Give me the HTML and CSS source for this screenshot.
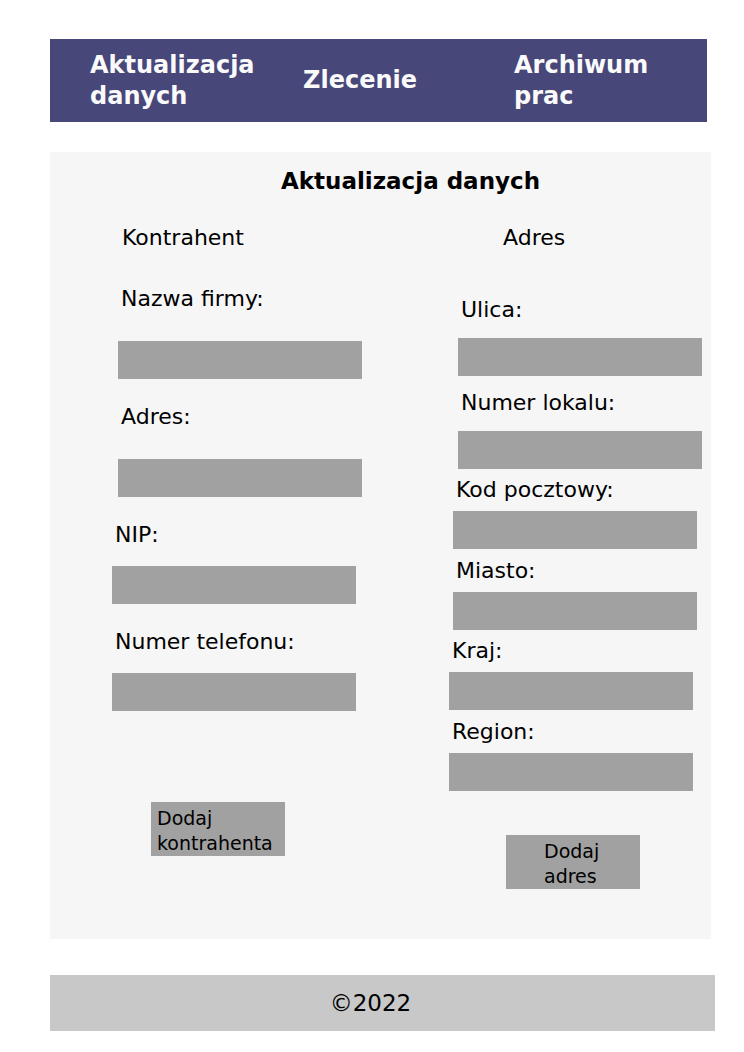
FILE: index.html
```html
<!DOCTYPE html>
<html lang="pl">
<head>
<meta charset="utf-8">
<meta name="viewport" content="width=device-width, initial-scale=1">
<title>Aktualizacja danych</title>
<link rel="stylesheet" href="styles.css">
</head>
<body>
<nav class="nav">
  <a class="nav-link" href="#dane">Aktualizacja<br>danych</a>
  <a class="nav-link" href="#zlecenie">Zlecenie</a>
  <a class="nav-link" href="#archiwum">Archiwum<br>prac</a>
</nav>
<main class="panel" id="dane">
  <h1 class="title">Aktualizacja danych</h1>
  <div class="columns">
    <form class="column column-client">
      <h2 class="subtitle">Kontrahent</h2>
      <div class="group group-airy inset-md">
        <div class="field"><label for="firma">Nazwa firmy:</label><input id="firma" type="text"></div>
        <div class="field"><label for="adres">Adres:</label><input id="adres" type="text"></div>
      </div>
      <div class="group group-medium">
        <div class="field"><label for="nip">NIP:</label><input id="nip" type="text"></div>
        <div class="field"><label for="telefon">Numer telefonu:</label><input id="telefon" type="tel"></div>
      </div>
      <button class="button" type="button">Dodaj<br>kontrahenta</button>
    </form>
    <form class="column column-address">
      <h2 class="subtitle">Adres</h2>
      <div class="group group-snug inset-lg">
        <div class="field"><label for="ulica">Ulica:</label><input id="ulica" type="text"></div>
        <div class="field"><label for="lokal">Numer lokalu:</label><input id="lokal" type="text"></div>
      </div>
      <div class="group group-tight inset-sm">
        <div class="field"><label for="kod">Kod pocztowy:</label><input id="kod" type="text"></div>
        <div class="field"><label for="miasto">Miasto:</label><input id="miasto" type="text"></div>
      </div>
      <div class="group group-tight">
        <div class="field"><label for="kraj">Kraj:</label><input id="kraj" type="text"></div>
        <div class="field"><label for="region">Region:</label><input id="region" type="text"></div>
      </div>
      <button class="button" type="button">Dodaj<br>adres</button>
    </form>
  </div>
</main>
<footer class="footer">©2022</footer>
</body>
</html>
```
FILE: styles.css
```css
* {
  box-sizing: border-box;
}

body {
  margin: 0;
  padding: 39px 29px 21px 50px;
  background: #fff;
  color: #000;
  font: 22px/28px "DejaVu Sans", Verdana, sans-serif;
}

.nav {
  display: grid;
  grid-template-columns: 213fr 211fr 193fr;
  align-items: center;
  min-height: 83px;
  margin-right: 8px;
  padding-left: 40px;
  background: #48477a;
}

.nav-link {
  color: #fafafa;
  font-size: 24px;
  font-weight: bold;
  line-height: 31px;
  text-decoration: none;
}

.panel {
  margin: 30px 4px 36px 0;
  padding: 15px 0 49px;
  background: #f6f6f6;
}

.title {
  margin: 0;
  padding-left: 60px;
  font-size: 23px;
  line-height: 28px;
  text-align: center;
}

.columns {
  display: grid;
  grid-template-columns: 399fr 262fr;
  margin-top: 29px;
}

.column-client {
  padding-left: 62px;
}

.subtitle {
  margin: 0;
  padding-left: 10px;
  font-size: 22px;
  font-weight: normal;
  line-height: 28px;
}

.column-address .subtitle {
  padding-left: 54px;
}

.group,
.field {
  display: flex;
  flex-direction: column;
}

.inset-lg { padding-left: 9px; }
.inset-md { padding-left: 6px; }
.inset-sm { padding-left: 4px; }

.field label {
  padding-left: 3px;
}

.field input {
  width: 244px;
  max-width: 100%;
  height: 38px;
  padding: 0 8px;
  border: 0;
  border-radius: 0;
  background: #a1a1a1;
  font: inherit;
}

.group-airy {
  gap: 24px;
  margin-top: 33px;
}

.group-airy .field { gap: 28px; }

.group-medium {
  gap: 24px;
  margin-top: 24px;
}

.group-medium .field { gap: 17px; }

.group-snug {
  gap: 13px;
  margin-top: 44px;
}

.group-snug .field { gap: 14px; }

.group-tight {
  gap: 8px;
  margin-top: 7px;
}

.group-tight .field { gap: 7px; }

.button {
  width: 134px;
  min-height: 54px;
  margin: 91px 0 0 39px;
  padding: 4px 0 0 6px;
  border: 0;
  background: #a1a1a1;
  color: #000;
  font: 19px/25px "DejaVu Sans", Verdana, sans-serif;
  text-align: left;
}

.column-address .button {
  margin: 44px 0 0 57px;
  padding-left: 38px;
}

.footer {
  padding: 14px 24px 14px 0;
  background: #c8c8c8;
  font-size: 23px;
  text-align: center;
}
```
